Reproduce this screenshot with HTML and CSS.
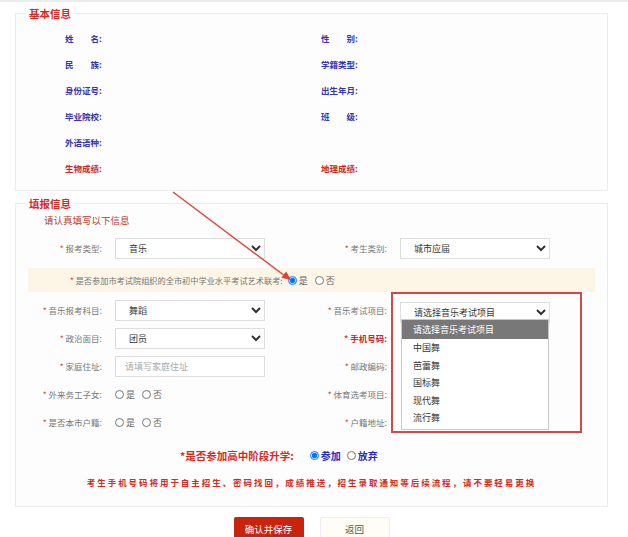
FILE: index.html
```html
<!DOCTYPE html>
<html lang="zh-CN">
<head>
    <meta charset="UTF-8">
    <meta name="viewport" content="width=device-width, initial-scale=1.0">
    <title>报名信息填报</title>
    <link rel="stylesheet" href="styles.css">
</head>
<body>
    <div class="page">
        <fieldset class="box base">
            <legend>基本信息</legend>
            <div class="info-grid">
                <div class="info">姓　　名:</div>
                <div class="info">性　　别:</div>
                <div class="info">民　　族:</div>
                <div class="info">学籍类型:</div>
                <div class="info">身份证号:</div>
                <div class="info">出生年月:</div>
                <div class="info">毕业院校:</div>
                <div class="info">班　　级:</div>
                <div class="info">外语语种:</div>
                <div class="info"></div>
                <div class="info score">生物成绩:</div>
                <div class="info score">地理成绩:</div>
            </div>
        </fieldset>

        <fieldset class="box apply">
            <legend>填报信息</legend>
            <p class="hint">请认真填写以下信息</p>

            <div class="form-row">
                <div class="cell">
                    <label class="lbl"><i>*</i> 报考类型:</label>
                    <select class="ctl"><option>音乐</option></select>
                </div>
                <div class="cell">
                    <label class="lbl"><i>*</i> 考生类别:</label>
                    <select class="ctl"><option>城市应届</option></select>
                </div>
            </div>

            <div class="joint">
                <span class="lbl-long"><i>*</i> 是否参加市考试院组织的全市初中学业水平考试艺术联考:</span>
                <label class="opt"><input type="radio" name="joint" checked>是</label>
                <label class="opt"><input type="radio" name="joint">否</label>
            </div>

            <div class="form-row">
                <div class="cell">
                    <label class="lbl"><i>*</i> 音乐报考科目:</label>
                    <select class="ctl"><option>舞蹈</option></select>
                </div>
                <div class="cell">
                    <label class="lbl"><i>*</i> 音乐考试项目:</label>
                    <div class="select-wrap">
                        <select class="ctl"><option>请选择音乐考试项目</option></select>
                        <ul class="options">
                            <li class="active">请选择音乐考试项目</li>
                            <li>中国舞</li>
                            <li>芭蕾舞</li>
                            <li>国标舞</li>
                            <li>现代舞</li>
                            <li>流行舞</li>
                        </ul>
                        <div class="focus-box"></div>
                    </div>
                </div>
            </div>

            <div class="form-row">
                <div class="cell">
                    <label class="lbl"><i>*</i> 政治面目:</label>
                    <select class="ctl"><option>团员</option></select>
                </div>
                <div class="cell">
                    <label class="lbl strong"><i>*</i> 手机号码:</label>
                </div>
            </div>

            <div class="form-row">
                <div class="cell">
                    <label class="lbl"><i>*</i> 家庭住址:</label>
                    <input class="ctl" type="text" placeholder="请填写家庭住址">
                </div>
                <div class="cell">
                    <label class="lbl"><i>*</i> 邮政编码:</label>
                </div>
            </div>

            <div class="form-row">
                <div class="cell">
                    <label class="lbl"><i>*</i> 外来务工子女:</label>
                    <label class="opt"><input type="radio" name="migrant">是</label>
                    <label class="opt"><input type="radio" name="migrant">否</label>
                </div>
                <div class="cell">
                    <label class="lbl"><i>*</i> 体育选考项目:</label>
                </div>
            </div>

            <div class="form-row">
                <div class="cell">
                    <label class="lbl"><i>*</i> 是否本市户籍:</label>
                    <label class="opt"><input type="radio" name="local">是</label>
                    <label class="opt"><input type="radio" name="local">否</label>
                </div>
                <div class="cell">
                    <label class="lbl"><i>*</i> 户籍地址:</label>
                </div>
            </div>

            <div class="rise">
                <span class="rise-lbl">*是否参加高中阶段升学:</span>
                <label class="opt"><input type="radio" name="rise" checked>参加</label>
                <label class="opt"><input type="radio" name="rise">放弃</label>
            </div>

            <p class="notice">考生手机号码将用于自主招生、密码找回，成绩推送，招生录取通知等后续流程，请不要轻易更换</p>
        </fieldset>

        <div class="actions">
            <button class="btn save">确认并保存</button>
            <button class="btn back">返回</button>
        </div>

        <!-- pointer to the art exam question -->
        <svg class="pointer" width="628" height="537" viewBox="0 0 628 537">
            <line x1="173" y1="192" x2="285" y2="276" stroke="#d8443a" stroke-width="1.4"/>
            <polygon points="291,280 281.4,277.8 286.2,271.4" fill="#d8443a"/>
        </svg>
    </div>
</body>
</html>
```

FILE: styles.css
```css
body {
    margin: 0;
    border-top: 2px solid #ececec;
    background: #fff;
    font-family: "Noto Sans CJK SC", "Noto Sans", sans-serif;
    color: #777;
}
.page {
    position: relative;
    padding: 5px 20px 0 15px;
}
.box {
    margin: 0;
    min-width: 0;
    border: 1px solid #ececec;
    background: #fdfdfd;
}
.box legend {
    padding: 0 3px;
    margin-left: -3px;
    color: #d42b1e;
    font-weight: bold;
    font-size: 10.5px;
    line-height: 13px;
}

/* basic info */
.base {
    padding: 0 12px 9px 49px;
}
.base legend {
    margin-left: -39px;
}
.info-grid {
    display: grid;
    grid-template-columns: 256px 1fr;
    grid-auto-rows: 26px;
    align-items: center;
    padding-top: 5px;
}
.info {
    color: #3535b0;
    font-weight: bold;
    font-size: 8.5px;
}
.info.score {
    color: #c62828;
}

/* application form */
.apply {
    margin-top: 6px;
    padding: 0 12px 16px 12px;
}
.apply legend {
    margin-left: -2px;
}
.hint {
    margin: 3px 0 7px 16px;
    line-height: 14px;
    font-size: 9.5px;
    color: #b5402f;
}
.form-row {
    display: grid;
    grid-template-columns: 285px 1fr;
    height: 28px;
}
.cell {
    display: flex;
    align-items: center;
}
.lbl {
    width: 87px;
    flex-shrink: 0;
    padding-right: 13px;
    box-sizing: border-box;
    text-align: right;
    font-size: 8.5px;
    color: #777;
    white-space: nowrap;
}
.lbl i,
.lbl-long i {
    font-style: normal;
    color: #e53935;
}
.lbl.strong {
    color: #c62828;
    font-weight: bold;
}
.ctl {
    width: 150px;
    height: 21px;
    box-sizing: border-box;
    border: 1px solid #ddd;
    border-radius: 0;
    background: #fff;
    padding: 0 0 0 9px;
    font-family: inherit;
    font-size: 9px;
    color: #333;
}
.ctl::placeholder {
    color: #aaa;
}
.opt {
    display: inline-flex;
    align-items: center;
    margin-right: 7px;
    font-size: 9px;
    color: #666;
}
.opt input {
    width: 9px;
    height: 9px;
    margin: 0 2px 0 0;
}

.joint {
    display: flex;
    align-items: center;
    height: 24px;
    margin: 6px 0 4px;
    padding-left: 42px;
    background: #fdf5e6;
}
.lbl-long {
    font-size: 8.2px;
    color: #777;
    margin-right: 5px;
}

/* open dropdown of the exam item select */
.select-wrap {
    position: relative;
}
.options {
    position: absolute;
    top: 22px;
    left: 1px;
    width: 148px;
    margin: 0;
    padding: 0 0 2px;
    list-style: none;
    background: #fff;
    border: 1px solid #c8c8c8;
    box-sizing: border-box;
    font-size: 9px;
    color: #333;
    z-index: 2;
}
.options li {
    height: 17.5px;
    line-height: 17.5px;
    padding-left: 11px;
}
.options li.active {
    height: 19px;
    line-height: 19px;
    background: #787878;
    color: #fff;
}
.focus-box {
    position: absolute;
    left: -9px;
    top: -5px;
    width: 191px;
    height: 141px;
    box-sizing: border-box;
    border: 2px solid #cf4a4a;
    z-index: 3;
}

.rise {
    display: flex;
    align-items: center;
    height: 20px;
    margin-top: 9px;
    padding-left: 152px;
}
.rise-lbl {
    color: #d42b1e;
    font-weight: bold;
    font-size: 10.5px;
    margin-right: 16px;
}
.rise .opt {
    color: #2a2ab8;
    font-weight: bold;
    font-size: 10px;
    margin-right: 6px;
}
.notice {
    margin: 9px 0 0;
    line-height: 16px;
    text-align: center;
    font-size: 8.5px;
    font-weight: bold;
    letter-spacing: 1.95px;
    color: #d42b1e;
}

.actions {
    display: flex;
    justify-content: center;
    gap: 16px;
    margin-top: 10px;
}
.btn {
    width: 70px;
    height: 24px;
    border-radius: 2px;
    font-family: inherit;
    font-size: 9.5px;
    cursor: pointer;
}
.btn.save {
    border: none;
    background: #c9230e;
    color: #fff;
}
.btn.back {
    border: 1px solid #eee;
    background: #fffdf6;
    color: #555;
}

.pointer {
    position: absolute;
    left: 0;
    top: -2px;
    pointer-events: none;
    z-index: 4;
}
```
